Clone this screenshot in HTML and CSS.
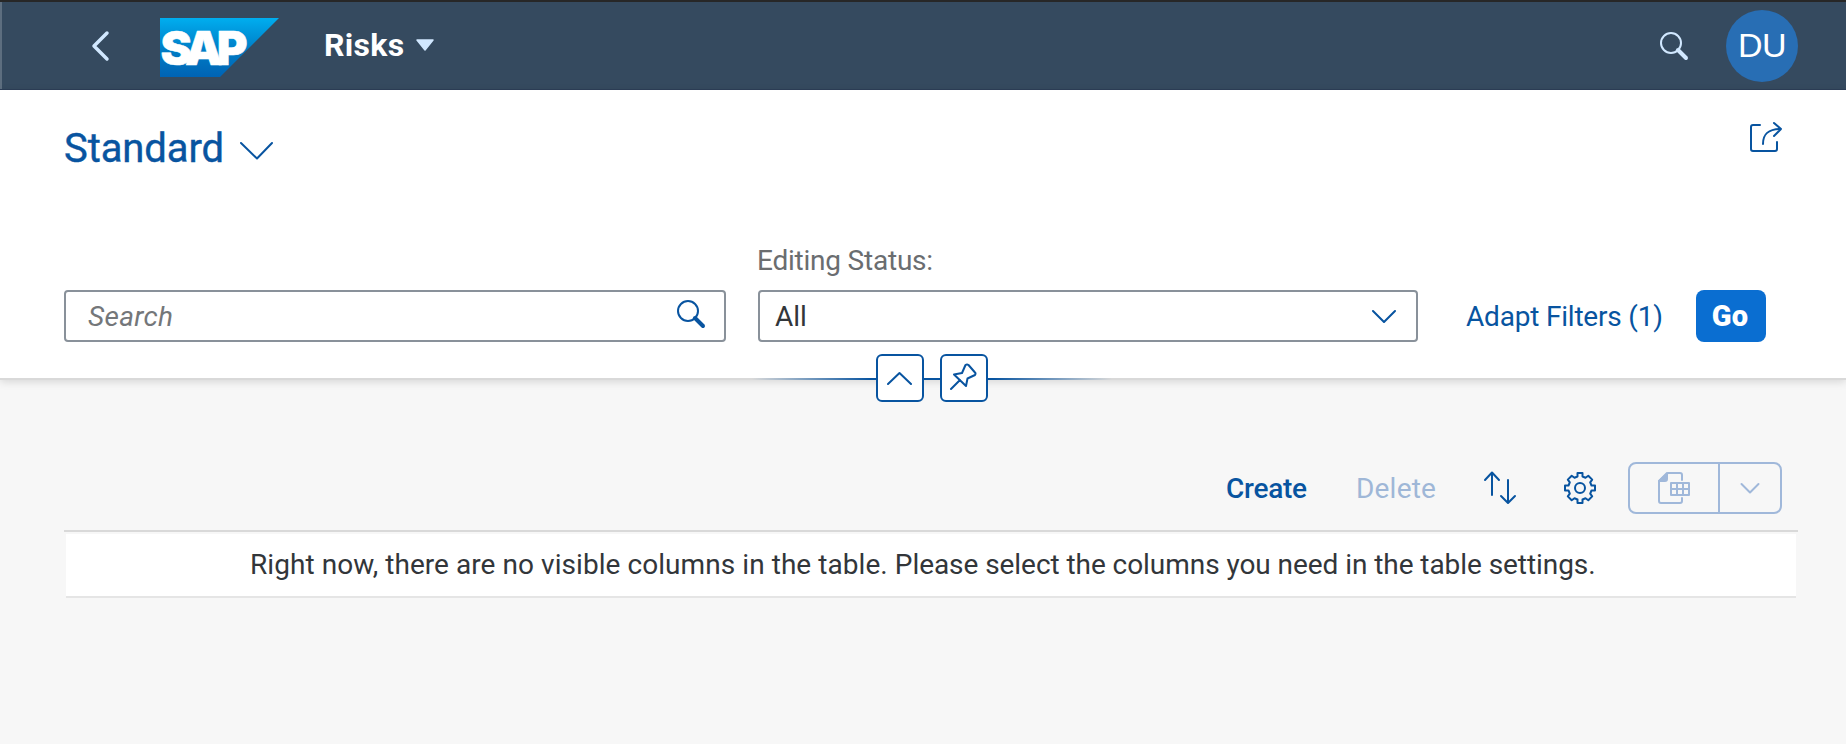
FILE: index.html
```html
<!DOCTYPE html>
<html lang="en">
<head>
<meta charset="utf-8">
<title>Risks</title>
<link rel="stylesheet" href="styles.css">
</head>
<body>
<header class="shell">
  <svg class="back" width="24" height="32" viewBox="0 0 24 32"><path d="M17 3 4 16 17 29"/></svg>
  <svg class="logo" width="119" height="59" viewBox="0 0 119 59">
    <defs><linearGradient id="sap" x1="0" y1="0" x2="0" y2="1"><stop offset="0" stop-color="#00aeef"/><stop offset=".25" stop-color="#0097dc"/><stop offset=".55" stop-color="#007cc5"/><stop offset="1" stop-color="#0063b4"/></linearGradient></defs>
    <path fill="url(#sap)" d="M0 0h119L60 59H0z"/>
    <text class="logo-text" x="0.500" y="47" textLength="87" lengthAdjust="spacing">SAP</text>
  </svg>
  <span class="app-title">Risks</span>
  <svg class="title-arrow" width="20" height="14" viewBox="0 0 20 14"><path d="M2 1h16l-8 10z"/></svg>
  <svg class="shell-search" width="30" height="30" viewBox="0 0 30 30"><circle cx="12" cy="12" r="10"/><path d="m19 19 8 8"/></svg>
  <div class="avatar">DU</div>
</header>
<section class="page-head">
  <div class="variant-row">
    <h1 class="variant">Standard</h1>
    <svg class="line-icon variant-arrow" width="36" height="20" viewBox="0 0 36 20"><path d="m2 2 16 15.500L33 2"/></svg>
    <svg class="line-icon share" width="34" height="34" viewBox="0 0 34 34"><path d="M11 5H4a2 2 0 0 0-2 2v22a2 2 0 0 0 2 2h22a2 2 0 0 0 2-2v-7"/><path d="M14 24C14 15 18 9 32 9M25 3l7 6-7 7"/></svg>
  </div>
  <div class="filters">
    <div class="field search"><span class="placeholder">Search</span>
      <svg class="line-icon" width="30" height="30" viewBox="0 0 30 30"><circle cx="12" cy="12" r="10"/><path class="handle" d="m19 19 8 8"/></svg>
    </div>
    <div class="status">
      <label class="label">Editing Status:</label>
      <div class="field select"><span class="value">All</span>
        <svg class="line-icon" width="26" height="14" viewBox="0 0 26 14"><path d="m2 2 11 11 11-11"/></svg>
      </div>
    </div>
    <span class="adapt">Adapt Filters (1)</span>
    <button class="go">Go</button>
  </div>
  <div class="snap">
    <button class="snap-btn"><svg class="line-icon" width="26" height="14" viewBox="0 0 26 14"><path d="m1 13 11.500-11 11.500 11"/></svg></button>
    <button class="snap-btn"><svg class="line-icon pin" width="28" height="28" viewBox="0 0 28 28"><path d="m2 26 9-9M16.500 2 13 10 5 11.500 17 23 18.500 15.500 26 12Q27 10.500 26 9.500L19.500 2Q18 1 16.500 2z"/></svg></button>
  </div>
</section>
<main class="content">
  <div class="toolbar">
    <span class="create">Create</span>
    <span class="delete">Delete</span>
    <svg class="line-icon sort" width="34" height="34" viewBox="0 0 34 34"><path d="M9 24V2M2 9l7-7.500L16 9M25 9v22M18 25l7 7 7-7"/></svg>
    <svg class="line-icon gear" width="34" height="34" viewBox="0 0 34 34"><circle cx="17" cy="17" r="5"/><path d="M14.500 2h5v3.500l3 1.200 2.800-2 3.900 3.900-2 2.800 1.300 3.100H32v5h-3.500l-1.300 3.100 2 2.800-3.900 3.900-2.800-2-3 1.200V32h-5v-3.500l-3-1.200-2.800 2-3.900-3.900 2-2.800-1.300-3.100H2v-5h3.500l1.300-3.100-2-2.800 3.900-3.900 2.800 2 3-1.200z"/></svg>
    <div class="split">
      <div class="split-main"><svg width="34" height="34" viewBox="0 0 34 34"><path d="M25 9V4a2 2 0 0 0-2-2H11L2 10v20a2 2 0 0 0 2 2h19a2 2 0 0 0 2-2v-3M14 12h18v12H14zM14 18h18M20 12v12M26 12v12"/><path class="fold" d="M10 2v6a2 2 0 0 1-2 2H2z"/></svg></div>
      <div class="split-arrow"><svg width="20" height="12" viewBox="0 0 20 12"><path d="m1.500 2 8.500 8.500L18.500 2"/></svg></div>
    </div>
  </div>
  <div class="table"><div class="message"><span>Right now, there are no visible columns in the table. </span><span class="message-hint">Please select the columns you need in the table settings.</span></div></div>
</main>
</body>
</html>
```
FILE: styles.css
```css
* { box-sizing: border-box; }
body { margin: 0; width: 1846px; height: 744px; overflow: hidden; background: #f7f7f7; color: #32363a; font: 28px/36px Roboto, "Noto Sans", sans-serif; }
svg { display: block; flex: none; fill: none; stroke-linecap: round; stroke-linejoin: round; }
span, h1, label { white-space: pre; }
.shell { height: 90px; display: flex; align-items: center; padding: 0 48px 0 86px; border-top: 2px solid #272727; border-bottom: 1px solid #2d3f58; background: linear-gradient(90deg, #5d6e7f 2px, #354a5f 2px); }
.back { margin-left: 4px; stroke: #d1e8ff; stroke-width: 3.500; }
.logo { margin: 3px 0 0 46px; }
.logo-text { font: 900 47px Inter, "Open Sans", sans-serif; fill: #fff; stroke: #fff; stroke-width: .5; }
.app-title { margin: -2px 0 0 45px; width: 80px; color: #fff; font-size: 32px; font-weight: 700; letter-spacing: .3px; }
.title-arrow { margin-left: 11px; fill: #d1e8ff; stroke: #d1e8ff; stroke-width: 1.500; }
.shell-search { margin-left: auto; margin-right: 37px; stroke: #d1e8ff; stroke-width: 2; }
.shell-search path { stroke-width: 4; }
.avatar { width: 72px; height: 72px; border-radius: 50%; background: #286eb4; color: #fff; display: grid; place-items: center; font: 400 34px "Liberation Sans", Arial, sans-serif; letter-spacing: -.5px; }
.page-head { height: 290px; display: flex; flex-direction: column; background: #fff; border-bottom: 2px solid #d9d9d9; box-shadow: 0 2px 8px rgba(0,0,0,.13); position: relative; }
.variant-row { display: flex; align-items: flex-start; height: 154px; padding: 31px 63px 0 64px; color: #0854a0; }
.variant { margin: 2px 0 0; width: 159px; font-size: 40px; line-height: 52px; font-weight: 400; letter-spacing: -.1px; -webkit-text-stroke: .4px; }
.line-icon { stroke: #0854a0; stroke-width: 2; }
.variant-arrow { margin: 20px 0 0 16px; }
.share { margin: -1px 0 0 auto; }
.filters { display: flex; align-items: flex-end; height: 98px; padding-left: 64px; }
.field { height: 52px; border: 2px solid #89919a; border-radius: 4px; display: flex; align-items: center; justify-content: space-between; }
.search { width: 662px; padding: 0 18px 0 22px; margin-right: 32px; }
.search svg { margin-bottom: 5px; }
.handle { stroke-width: 4; }
.placeholder { padding-top: 1px; font-style: italic; color: #74777a; letter-spacing: .3px; }
.status { width: 660px; }
.label { display: block; margin-left: -1px; color: #6a6d70; height: 47px; letter-spacing: -.22px; }
.select { padding: 0 19px 0 15px; }
.value { padding-top: 1px; }
.adapt { margin-left: 48px; width: 200px; color: #0854a0; line-height: 50px; letter-spacing: -.2px; }
.go { margin-left: 30px; width: 70px; height: 52px; padding: 0 2px 0 0; border: 0; border-radius: 8px; background: #0a6ed1; color: #fff; font: 900 29px Roboto, sans-serif; letter-spacing: .2px; }
.snap { position: absolute; left: 752px; top: 264px; width: 360px; height: 48px; display: flex; gap: 16px; padding-left: 124px; background: linear-gradient(90deg, transparent, #0854a0 33%, #0854a0 67%, transparent) 0 24px / 100% 2px no-repeat; }
.snap-btn { width: 48px; height: 48px; padding: 0; display: grid; place-items: center; border: 2px solid #0854a0; border-radius: 6px; background: #fff; }
.pin { margin: 0 2px 2px 0; }
.content { padding: 82px 48px 0 64px; }
.toolbar { height: 68px; padding-right: 16px; display: flex; align-items: flex-start; justify-content: flex-end; color: #0854a0; line-height: 54px; }
.create { width: 82px; font-weight: 500; margin-right: 48px; letter-spacing: -.25px; }
.delete { width: 81px; color: #9fb7d7; margin-right: 46px; letter-spacing: .2px; }
.sort { margin: 9px 46px 0 0; }
.gear { margin: 9px 31px 0 0; }
.split { display: flex; width: 154px; height: 52px; border: 2px solid #a0b8da; border-radius: 8px; }
.split svg { stroke: #a0b8da; stroke-width: 2; }
.split .fold { fill: #a0b8da; }
.split-main { width: 90px; border-right: 2px solid #a0b8da; display: grid; place-items: center; }
.split-arrow { flex: 1; display: grid; place-items: center; }
.table { border-top: 2px solid #d9d9d9; padding: 2px 2px 0; }
.message { height: 64px; background: #fff; border-bottom: 2px solid #e5e5e5; display: flex; padding: 13px 0 0 184px; letter-spacing: .06px; }
.message-hint { letter-spacing: -.06px; }
```
